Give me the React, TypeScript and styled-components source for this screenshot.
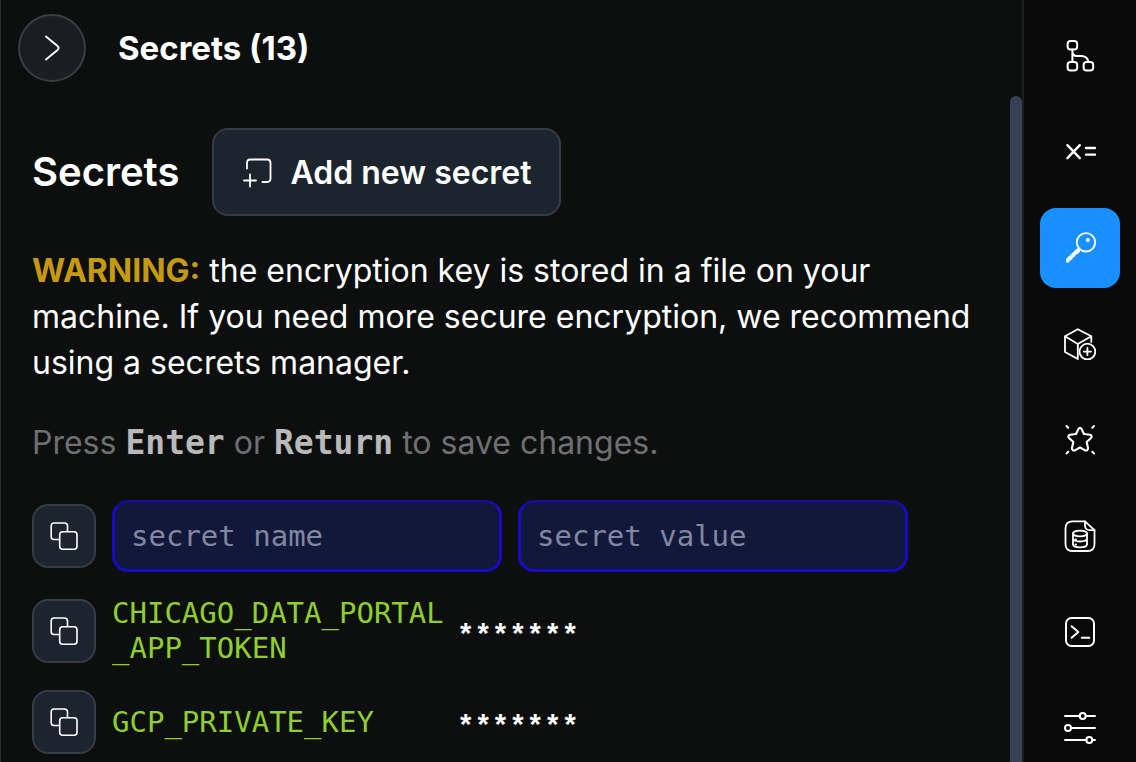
import React from "react";
import styled, { createGlobalStyle } from "styled-components";

const sans = `Inter, "Liberation Sans", sans-serif`;
const mono = `"DejaVu Sans Mono", "Liberation Mono", monospace`;

const GlobalStyle = createGlobalStyle`
  *, *::before, *::after { box-sizing: border-box; }
  body { margin: 0; background: #0c0f0e; color: #fff; font-family: ${sans}; }
  h1, h2, p { margin: 0; }
  button, input { font: inherit; color: inherit; }
`;

const Shell = styled.div`
  display: flex;
  height: 100vh;
  overflow: hidden;
  border-left: 1px solid #2b2e2e;
`;

const Panel = styled.section`
  flex: 1;
  min-width: 0;
  display: flex;
  flex-direction: column;
`;

const PanelHeader = styled.header`
  flex: none;
  display: flex;
  align-items: center;
  gap: 32px;
  height: 96px;
  padding: 0 17px;
`;

const CollapseButton = styled.button`
  display: grid;
  place-items: center;
  width: 68px;
  height: 68px;
  padding: 0;
  border: 2px solid #393e46;
  border-radius: 50%;
  background: #1a1e21;
`;

const PanelTitle = styled.h1`
  font-size: 33px;
  line-height: 40px;
  font-weight: 700;
`;

const PanelBody = styled.div`
  flex: 1;
  min-height: 0;
  display: flex;
`;

const Content = styled.main`
  flex: 1;
  min-width: 0;
  padding: 32px 31px 0;
`;

const ScrollThumb = styled.div`
  flex: none;
  width: 12px;
  border-radius: 6px 6px 0 0;
  background: #374151;
`;

const HeadingRow = styled.div`
  display: flex;
  align-items: center;
  gap: 33px;
  margin-bottom: 32px;
`;

const Heading = styled.h2`
  font-size: 40px;
  line-height: 48px;
  font-weight: 600;
`;

const AddButton = styled.button`
  display: flex;
  align-items: center;
  gap: 16px;
  height: 88px;
  padding: 0 28px;
  border: 2px solid #363c46;
  border-radius: 16px;
  background: #1c252d;
  font-size: 32px;
  font-weight: 600;
  white-space: nowrap;
`;

const Text = styled.p<{ $muted?: boolean }>`
  margin-bottom: 32px;
  font-size: 32px;
  line-height: ${(p) => (p.$muted ? "50px" : "46px")};
  font-weight: 400;
  color: ${(p) => (p.$muted ? "#6d6f72" : "#fff")};
`;

const Warning = styled.strong`
  font-weight: 700;
  color: #c69a10;
`;

const Key = styled.kbd`
  font-family: ${mono};
  font-size: 33px;
  line-height: 40px;
  font-weight: 700;
  color: #b9b9b9;
`;

const NewSecretForm = styled.form`
  display: flex;
  align-items: center;
  gap: 16px;
`;

const CopyButton = styled.button`
  flex: none;
  display: grid;
  place-items: center;
  width: 64px;
  height: 64px;
  padding: 0;
  border: 2px solid #363c46;
  border-radius: 16px;
  background: #1c252d;
`;

const SecretInput = styled.input`
  flex: 0 1 390px;
  min-width: 0;
  height: 72px;
  padding: 0 16px;
  border: 3px solid #190bc4;
  border-top-color: #160d90;
  border-radius: 16px;
  background: #12183a;
  font-family: ${mono};
  font-size: 29px;
  &::placeholder { color: #8088a0; opacity: 1; }
`;

const SecretTable = styled.table`
  border-collapse: collapse;
  font-family: ${mono};
  font-size: 29px;
  line-height: 35px;
  text-align: left;
  td, th { padding: 24px 0 0; vertical-align: middle; }
`;

const CopyCell = styled.td`
  width: 80px;
`;

const NameCell = styled.th`
  width: 345px;
  font-weight: 400;
  color: #8fce2e;
  word-break: break-all;
`;

const ValueCell = styled.td`
  && { padding-top: 36px; }
  font-family: "Liberation Mono", monospace;
  font-weight: 700;
`;

const Rail = styled.nav`
  flex: none;
  display: flex;
  flex-direction: column;
  gap: 16px;
  padding: 16px;
  border-left: 2px solid #1a1f22;
  background: #090909;
`;

const RailButton = styled.button<{ $active?: boolean }>`
  flex: none;
  display: grid;
  place-items: center;
  width: 80px;
  height: 80px;
  padding: 0;
  border: 0;
  border-radius: 16px;
  background: ${(p) => (p.$active ? "#1890ff" : "transparent")};
`;

const Glyph = styled.svg.attrs({ viewBox: "0 0 32 32", "aria-hidden": true })<{ $weight?: number }>`
  display: block;
  flex: none;
  width: 32px;
  height: 32px;
  fill: none;
  stroke: #fff;
  stroke-width: ${(p) => p.$weight ?? 1.8};
  stroke-linecap: round;
  stroke-linejoin: round;
`;

const ChevronIcon = () => (
  <Glyph>
    <path d="M10 4.500L21.500 14Q23.800 16 21.500 18L10 27.500" />
  </Glyph>
);

const AddIcon = () => (
  <Glyph>
    <path d="M5 12.500V7Q5 3.500 8.500 3.500H25Q28.500 3.500 28.500 7V22.500Q28.500 26 25 26H20.500" />
    <path d="M8 18.500V30.500M2 24.500H14" />
  </Glyph>
);

const CopyIcon = () => (
  <Glyph $weight={1.6}>
    <path d="M11.500 19.500H6Q3.200 19.500 3.200 16.700V6Q3.200 3 6 3H16.500Q19.500 3 19.500 6V11.500" />
    <rect x="11.700" y="11.700" width="17.300" height="17.500" rx="3" />
  </Glyph>
);

const TreeIcon = () => (
  <Glyph $weight={2}>
    <rect x="3.600" y="1" width="9.600" height="8.600" rx="3" />
    <rect x="3.600" y="22" width="9.600" height="8.600" rx="3" />
    <rect x="19.600" y="22" width="9.600" height="8.600" rx="3" />
    <path d="M8.400 9.600V22M8.400 12Q9 16 12.500 16H18Q23.500 16.500 24.400 22" />
  </Glyph>
);

const VariableIcon = () => (
  <Glyph $weight={2.4}>
    <path d="M3.400 9.200L15.800 22.200M15.800 9.200L3.400 22.200" />
    <path d="M22 12H31M22 18.600H31" />
  </Glyph>
);

const KeyIcon = () => (
  <Glyph>
    <circle cx="22" cy="10.300" r="9.200" />
    <circle cx="23.800" cy="8" r="2" fill="#fff" stroke="none" />
    <path
      d="M14 15.500L2 27V30.500H5L5.800 28.500L8 27.800L9 25.500L11 24.500L12 22.500L14.800 21.200L16.300 18.500Z"
      fill="#fff"
      stroke="none"
    />
  </Glyph>
);

const PackageIcon = () => (
  <Glyph>
    <path d="M27.300 14V8.200L13.800 1.200L1 8.200V24L13.800 31V16L1 8.200M13.800 16L27.300 8.200" />
    <circle cx="23.400" cy="23.600" r="7.900" />
    <path d="M23.400 20V27.200M19.800 23.600H27" />
  </Glyph>
);

const StarIcon = () => (
  <Glyph $weight={2.1}>
    <path d="M14.300 5.200Q16 2.600 17.700 5.200L20 10L26 10.700Q28.800 11.600 27 14L22.700 18L24 24Q24 27.300 21 26.300L16 23.500L11 26.300Q8 27.300 8 24L9.300 18L5 14Q3.200 11.600 6 10.700L12 10Z" />
    <path d="M2.500 2L4.200 3.700M30 2L28.300 3.700M2.500 29.500L4.200 27.800M30 29.500L28.300 27.800" />
  </Glyph>
);

const DataIcon = () => (
  <Glyph>
    <path d="M21 1.300H8.500Q1.500 1.300 1.500 8.500V24Q1.500 31 8.500 31H23.500Q30.500 31 30.500 24V10.200Z" />
    <path d="M21 1.300V6Q21.500 10 25.500 10.200H30.500" />
    <ellipse cx="16" cy="13.500" rx="7" ry="2.900" />
    <path d="M9 13.500V24.500Q9.500 27.300 16 27.300T23 24.500V13.500M9 18.800Q10 21.500 16 21.500T23 18.800" />
    <path d="M11.500 19.500H12M11.500 24.500H12" />
  </Glyph>
);

const TerminalIcon = () => (
  <Glyph $weight={2}>
    <rect x="2" y="2" width="28" height="28" rx="5.500" />
    <path d="M7.600 10.300L14.300 16L7.600 21.700M17.800 21.700H25.300" />
  </Glyph>
);

const SlidersIcon = () => (
  <Glyph $weight={2}>
    <path d="M1 4H15.700M21.700 4H31M7 16H31M1 28H22.300M28.300 28H31" />
    <circle cx="18.700" cy="4" r="3" />
    <circle cx="4" cy="16" r="3" />
    <circle cx="25.300" cy="28" r="3" />
  </Glyph>
);

const tools = [
  { label: "Pipeline tree", Icon: TreeIcon },
  { label: "Variables", Icon: VariableIcon },
  { label: "Secrets", Icon: KeyIcon },
  { label: "Add-ons", Icon: PackageIcon },
  { label: "Power-ups", Icon: StarIcon },
  { label: "Data", Icon: DataIcon },
  { label: "Terminal", Icon: TerminalIcon },
  { label: "Settings", Icon: SlidersIcon },
];

const secrets = [
  { name: "CHICAGO_DATA_PORTAL_APP_TOKEN", value: "*******" },
  { name: "GCP_PRIVATE_KEY", value: "*******" },
];

export default function App() {
  return (
    <>
      <GlobalStyle />
      <Shell>
        <Panel>
          <PanelHeader>
            <CollapseButton type="button" aria-label="Collapse panel">
              <ChevronIcon />
            </CollapseButton>
            <PanelTitle>Secrets (13)</PanelTitle>
          </PanelHeader>
          <PanelBody>
            <Content>
              <HeadingRow>
                <Heading>Secrets</Heading>
                <AddButton type="button">
                  <AddIcon />
                  Add new secret
                </AddButton>
              </HeadingRow>
              <Text>
                <Warning>WARNING:</Warning> the encryption key is stored in a file on your machine.
                If you need more secure encryption, we recommend using a secrets manager.
              </Text>
              <Text $muted>
                Press <Key>Enter</Key> or <Key>Return</Key> to save changes.
              </Text>
              <NewSecretForm onSubmit={(e) => e.preventDefault()}>
                <CopyButton type="button" aria-label="Copy new secret">
                  <CopyIcon />
                </CopyButton>
                <SecretInput aria-label="Secret name" placeholder="secret name" />
                <SecretInput aria-label="Secret value" placeholder="secret value" />
              </NewSecretForm>
              <SecretTable>
                <tbody>
                  {secrets.map((s) => (
                    <tr key={s.name}>
                      <CopyCell>
                        <CopyButton type="button" aria-label={`Copy ${s.name}`}>
                          <CopyIcon />
                        </CopyButton>
                      </CopyCell>
                      <NameCell scope="row">{s.name}</NameCell>
                      <ValueCell>{s.value}</ValueCell>
                    </tr>
                  ))}
                </tbody>
              </SecretTable>
            </Content>
            <ScrollThumb />
          </PanelBody>
        </Panel>
        <Rail aria-label="Tools">
          {tools.map(({ label, Icon }) => (
            <RailButton key={label} type="button" aria-label={label} $active={label === "Secrets"}>
              <Icon />
            </RailButton>
          ))}
        </Rail>
      </Shell>
    </>
  );
}
